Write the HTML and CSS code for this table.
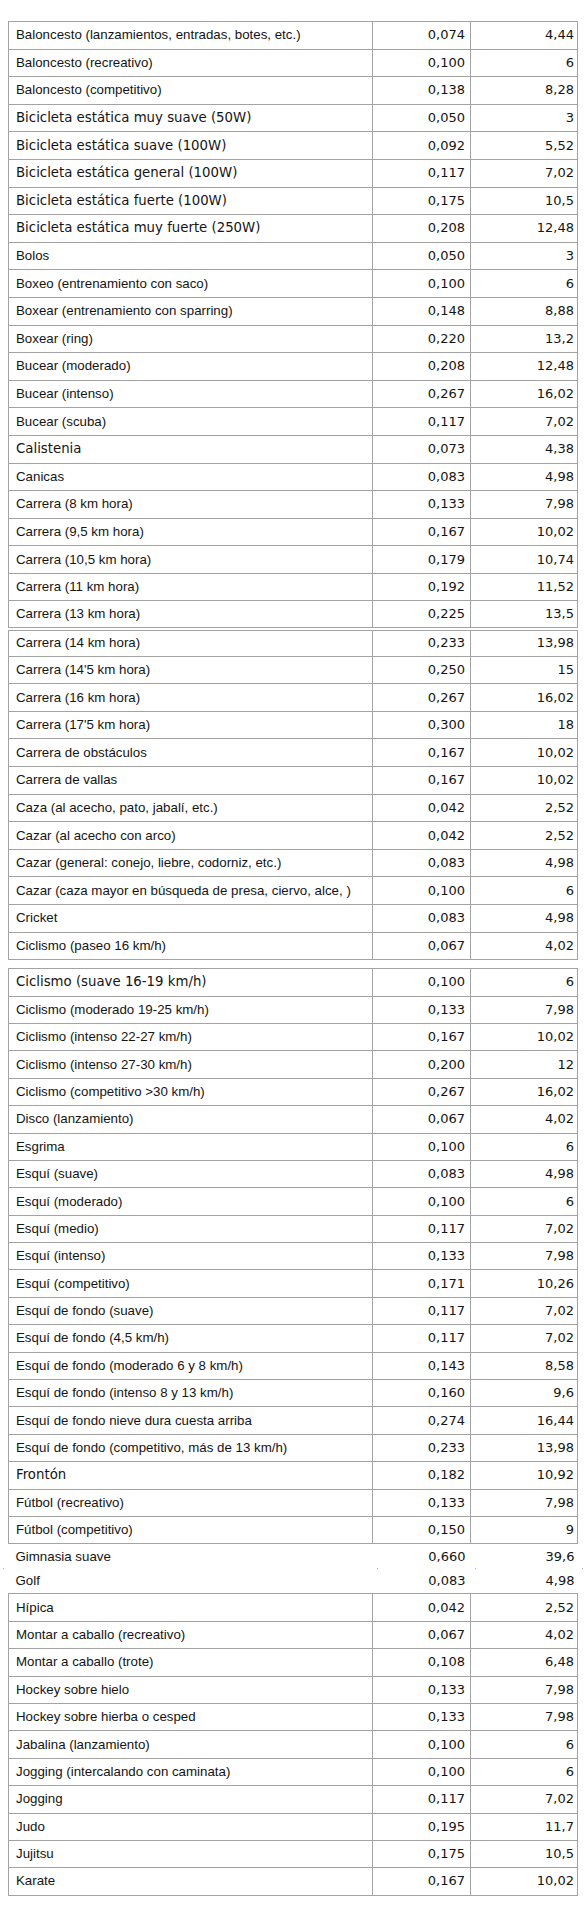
FILE: index.html
```html
<!DOCTYPE html>
<html lang="es">
<head>
<meta charset="utf-8">
<title>Actividades</title>
<link rel="stylesheet" href="styles.css">
</head>
<body>
<div class="page">
<table class="tabla tabla-1">
<colgroup><col class="c1"><col class="c2"><col class="c3"></colgroup>
<tbody>
<tr><td>Baloncesto (lanzamientos, entradas, botes, etc.)</td><td>0,074</td><td>4,44</td></tr>
<tr><td>Baloncesto (recreativo)</td><td>0,100</td><td>6</td></tr>
<tr><td>Baloncesto (competitivo)</td><td>0,138</td><td>8,28</td></tr>
<tr class="v"><td>Bicicleta estática muy suave (50W)</td><td>0,050</td><td>3</td></tr>
<tr class="v"><td>Bicicleta estática suave (100W)</td><td>0,092</td><td>5,52</td></tr>
<tr class="v"><td>Bicicleta estática general (100W)</td><td>0,117</td><td>7,02</td></tr>
<tr class="v"><td>Bicicleta estática fuerte (100W)</td><td>0,175</td><td>10,5</td></tr>
<tr class="v"><td>Bicicleta estática muy fuerte (250W)</td><td>0,208</td><td>12,48</td></tr>
<tr><td>Bolos</td><td>0,050</td><td>3</td></tr>
<tr><td>Boxeo (entrenamiento con saco)</td><td>0,100</td><td>6</td></tr>
<tr><td>Boxear (entrenamiento con sparring)</td><td>0,148</td><td>8,88</td></tr>
<tr><td>Boxear (ring)</td><td>0,220</td><td>13,2</td></tr>
<tr><td>Bucear (moderado)</td><td>0,208</td><td>12,48</td></tr>
<tr><td>Bucear (intenso)</td><td>0,267</td><td>16,02</td></tr>
<tr><td>Bucear (scuba)</td><td>0,117</td><td>7,02</td></tr>
<tr class="v"><td>Calistenia</td><td>0,073</td><td>4,38</td></tr>
<tr><td>Canicas</td><td>0,083</td><td>4,98</td></tr>
<tr><td>Carrera (8 km hora)</td><td>0,133</td><td>7,98</td></tr>
<tr><td>Carrera (9,5 km hora)</td><td>0,167</td><td>10,02</td></tr>
<tr><td>Carrera (10,5 km hora)</td><td>0,179</td><td>10,74</td></tr>
<tr><td>Carrera (11 km hora)</td><td>0,192</td><td>11,52</td></tr>
<tr class="dbl"><td>Carrera (13 km hora)</td><td>0,225</td><td>13,5</td></tr>
<tr><td>Carrera (14 km hora)</td><td>0,233</td><td>13,98</td></tr>
<tr><td>Carrera (14'5 km hora)</td><td>0,250</td><td>15</td></tr>
<tr><td>Carrera (16 km hora)</td><td>0,267</td><td>16,02</td></tr>
<tr><td>Carrera (17'5 km hora)</td><td>0,300</td><td>18</td></tr>
<tr><td>Carrera de obstáculos</td><td>0,167</td><td>10,02</td></tr>
<tr><td>Carrera de vallas</td><td>0,167</td><td>10,02</td></tr>
<tr><td>Caza (al acecho, pato, jabalí, etc.)</td><td>0,042</td><td>2,52</td></tr>
<tr><td>Cazar (al acecho con arco)</td><td>0,042</td><td>2,52</td></tr>
<tr><td>Cazar (general: conejo, liebre, codorniz, etc.)</td><td>0,083</td><td>4,98</td></tr>
<tr><td>Cazar (caza mayor en búsqueda de presa, ciervo, alce, )</td><td>0,100</td><td>6</td></tr>
<tr><td>Cricket</td><td>0,083</td><td>4,98</td></tr>
<tr><td>Ciclismo (paseo 16 km/h)</td><td>0,067</td><td>4,02</td></tr>
</tbody>
</table>

<table class="tabla tabla-2">
<colgroup><col class="c1"><col class="c2"><col class="c3"></colgroup>
<tbody>
<tr class="v"><td>Ciclismo (suave 16-19 km/h)</td><td>0,100</td><td>6</td></tr>
<tr><td>Ciclismo (moderado 19-25 km/h)</td><td>0,133</td><td>7,98</td></tr>
<tr><td>Ciclismo (intenso 22-27 km/h)</td><td>0,167</td><td>10,02</td></tr>
<tr><td>Ciclismo (intenso 27-30 km/h)</td><td>0,200</td><td>12</td></tr>
<tr><td>Ciclismo (competitivo &gt;30 km/h)</td><td>0,267</td><td>16,02</td></tr>
<tr><td>Disco (lanzamiento)</td><td>0,067</td><td>4,02</td></tr>
<tr><td>Esgrima</td><td>0,100</td><td>6</td></tr>
<tr><td>Esquí (suave)</td><td>0,083</td><td>4,98</td></tr>
<tr><td>Esquí (moderado)</td><td>0,100</td><td>6</td></tr>
<tr><td>Esquí (medio)</td><td>0,117</td><td>7,02</td></tr>
<tr><td>Esquí (intenso)</td><td>0,133</td><td>7,98</td></tr>
<tr><td>Esquí (competitivo)</td><td>0,171</td><td>10,26</td></tr>
<tr><td>Esquí de fondo (suave)</td><td>0,117</td><td>7,02</td></tr>
<tr><td>Esquí de fondo (4,5 km/h)</td><td>0,117</td><td>7,02</td></tr>
<tr><td>Esquí de fondo (moderado 6 y 8 km/h)</td><td>0,143</td><td>8,58</td></tr>
<tr><td>Esquí de fondo (intenso 8 y 13 km/h)</td><td>0,160</td><td>9,6</td></tr>
<tr><td>Esquí de fondo nieve dura cuesta arriba</td><td>0,274</td><td>16,44</td></tr>
<tr><td>Esquí de fondo (competitivo, más de 13 km/h)</td><td>0,233</td><td>13,98</td></tr>
<tr class="v"><td>Frontón</td><td>0,182</td><td>10,92</td></tr>
<tr><td>Fútbol (recreativo)</td><td>0,133</td><td>7,98</td></tr>
<tr><td>Fútbol (competitivo)</td><td>0,150</td><td>9</td></tr>
<tr class="open open-top"><td>Gimnasia suave</td><td>0,660</td><td>39,6</td></tr>
<tr class="open open-bottom"><td>Golf</td><td>0,083</td><td>4,98</td></tr>
<tr><td>Hípica</td><td>0,042</td><td>2,52</td></tr>
<tr><td>Montar a caballo (recreativo)</td><td>0,067</td><td>4,02</td></tr>
<tr><td>Montar a caballo (trote)</td><td>0,108</td><td>6,48</td></tr>
<tr><td>Hockey sobre hielo</td><td>0,133</td><td>7,98</td></tr>
<tr><td>Hockey sobre hierba o cesped</td><td>0,133</td><td>7,98</td></tr>
<tr><td>Jabalina (lanzamiento)</td><td>0,100</td><td>6</td></tr>
<tr><td>Jogging (intercalando con caminata)</td><td>0,100</td><td>6</td></tr>
<tr><td>Jogging</td><td>0,117</td><td>7,02</td></tr>
<tr><td>Judo</td><td>0,195</td><td>11,7</td></tr>
<tr><td>Jujitsu</td><td>0,175</td><td>10,5</td></tr>
<tr><td>Karate</td><td>0,167</td><td>10,02</td></tr>
</tbody>
</table>
</div>
</body>
</html>
```

FILE: styles.css
```css
html, body {
  margin: 0;
  padding: 0;
  background: #ffffff;
}

.page {
  padding: 21px 0 0 8px;
}

.tabla {
  border-collapse: collapse;
  table-layout: fixed;
  width: 569px;
  color: #141414;
}

.tabla-2 {
  margin-top: 8px;
}

.c1 { width: 364px; }
.c2 { width: 98px; }
.c3 { width: 107px; }

.tabla-1 tr {
  height: 27.6px;
}

.tabla-2 tr {
  height: 27.4px;
}

.tabla td {
  border: 1px solid #a3a3a3;
  padding: 0 4px 0 7px;
  vertical-align: middle;
  white-space: nowrap;
  overflow: hidden;
  font-family: "DejaVu Sans", Verdana, sans-serif;
  font-size: 13px;
  line-height: 16px;
  text-align: right;
}

.tabla td:nth-child(2) {
  padding-right: 5px;
}

.tabla td:nth-child(3) {
  padding-right: 3px;
}

.tabla td:first-child {
  text-align: left;
  font-family: "Liberation Sans", Arial, sans-serif;
  font-size: 13.3px;
}

.tabla tr.v td:first-child {
  font-family: "DejaVu Sans", Verdana, sans-serif;
  font-size: 13.3px;
}

.tabla tr.dbl td {
  border-bottom: 4px double #a3a3a3;
}

.tabla-2 tr.open {
  height: 25px;
}

.tabla tr.open td {
  border-left-style: none;
  border-right-style: none;
}

.tabla tr.open-top td {
  border-bottom-style: none;
}

.tabla tr.open-bottom td {
  border-top-style: none;
  position: relative;
  overflow: visible;
}

/* faint leftover dots where the column rules break */
.tabla tr.open-bottom td::before {
  content: "";
  position: absolute;
  top: -1px;
  left: 4px;
  width: 1px;
  height: 1px;
  background: #b8b8b8;
}

.tabla tr.open-bottom td:first-child::before {
  left: -6px;
}

.tabla tr.open-bottom td:last-child::after {
  content: "";
  position: absolute;
  top: -1px;
  right: -5px;
  width: 1px;
  height: 1px;
  background: #b8b8b8;
}
```
